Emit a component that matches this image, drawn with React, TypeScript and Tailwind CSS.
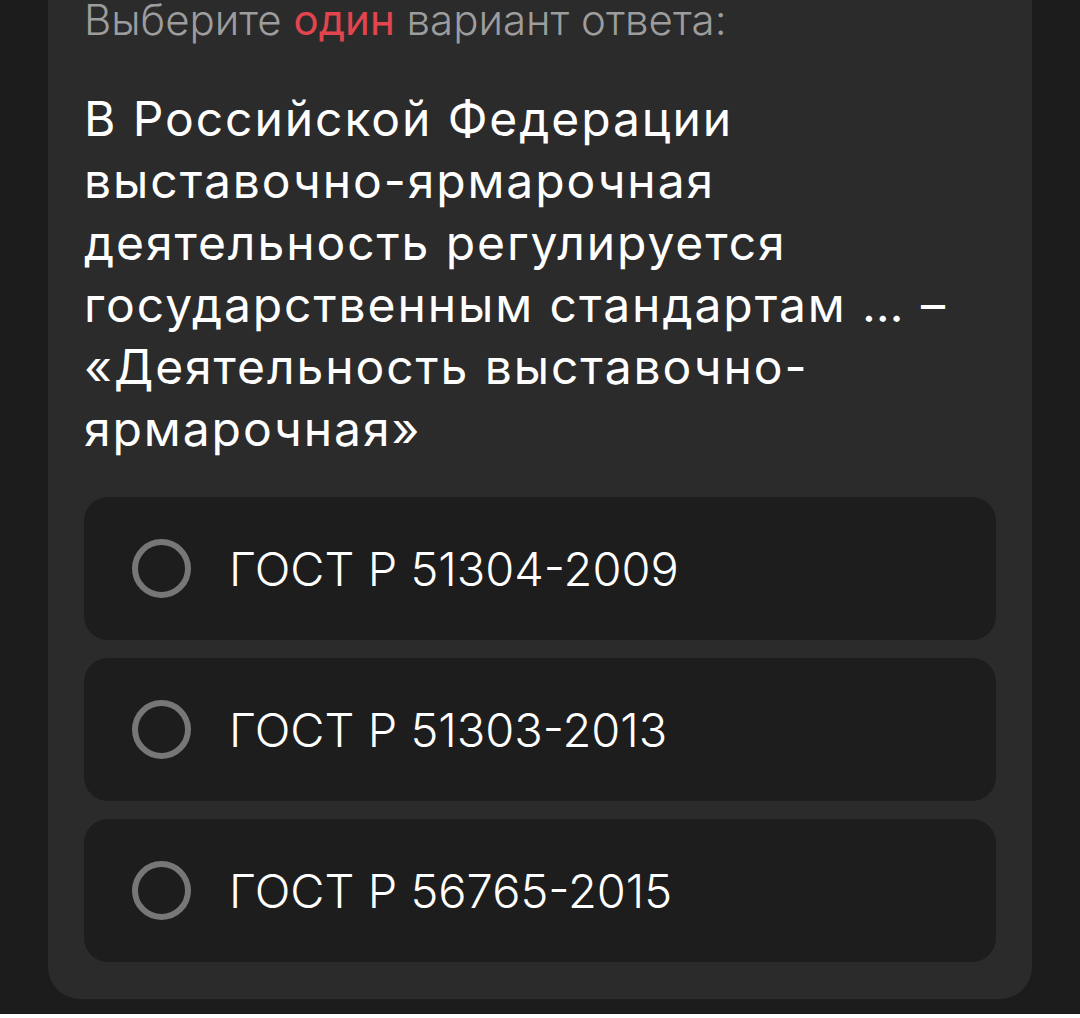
import React, { useState } from 'react';

const options = ['ГОСТ Р 51304-2009', 'ГОСТ Р 51303-2013', 'ГОСТ Р 56765-2015'];

export default function App() {
  const [selected, setSelected] = useState<number | null>(null);

  return (
    <div
      className="min-h-[1018px] w-full bg-[#1c1c1c] px-[48px]"
      style={{ fontFamily: 'Inter, "Noto Sans", sans-serif' }}
    >
      <div className="rounded-b-[32px] bg-[#2b2b2b] px-[36px] pb-[37px]">
        <p className="-mt-1 text-[42px] leading-[48px] font-light text-[#9d9d9d]">
          Выберите <span className="font-normal text-[#e2454d]">один</span> вариант ответа:
        </p>

        <h1 className="mt-[44px] text-[48px] leading-[62px] font-normal tracking-[0.04em] text-white">
          В Российской Федерации выставочно-ярмарочная деятельность регулируется
          государственным стандартам … – «Деятельность выставочно-ярмарочная»
        </h1>

        <div className="mt-[37px] flex flex-col gap-[18px]">
          {options.map((opt, i) => (
            <button
              key={opt}
              type="button"
              onClick={() => setSelected(i)}
              className="flex h-[143px] items-center rounded-[24px] bg-[#1d1d1d] pl-[48px] text-left"
            >
              <span className="flex h-[59px] w-[59px] shrink-0 items-center justify-center rounded-full border-[6px] border-[#777777]">
                {selected === i && <span className="h-[27px] w-[27px] rounded-full bg-[#e2454d]" />}
              </span>
              <span className="ml-[38px] text-[47px] leading-none font-light text-white">{opt}</span>
            </button>
          ))}
        </div>
      </div>
    </div>
  );
}
